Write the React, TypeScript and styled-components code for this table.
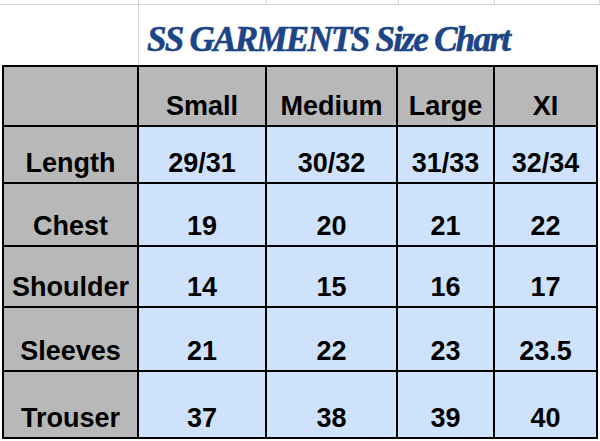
import React from 'react';
import styled, {createGlobalStyle} from 'styled-components';

const GlobalStyle = createGlobalStyle`
  html, body {
    margin: 0;
    padding: 0;
    background: #fff;
  }
  body {
    font-family: "Liberation Sans", Arial, sans-serif;
  }
`;

const sizes = ['Small', 'Medium', 'Large', 'XI'];

const rows = [
    {label: 'Length', values: ['29/31', '30/32', '31/33', '32/34']},
    {label: 'Chest', values: ['19', '20', '21', '22']},
    {label: 'Shoulder', values: ['14', '15', '16', '17']},
    {label: 'Sleeves', values: ['21', '22', '23', '23.5']},
    {label: 'Trouser', values: ['37', '38', '39', '40']},
];

const Sheet = styled.div`
    width: 600px;
    height: 441px;
    overflow: hidden;
    background: #fff;
`;

const StripRow = styled.div`
    display: grid;
    grid-template-columns: 139px 128px 132px 96px 1fr;
    height: 5px;
    border-bottom: 1px solid #d6d6d6;
    box-sizing: border-box;
`;

const GridCell = styled.div`
    border-right: 1px solid #d6d6d6;
    box-sizing: border-box;
`;

const TitleRow = styled.div`
    display: grid;
    grid-template-columns: 139px 1fr;
    height: 60px;
`;

const Title = styled.div`
    display: flex;
    align-items: flex-end;
    padding: 0 0 8px 8px;
    font-family: "Liberation Serif", "Times New Roman", serif;
    font-style: italic;
    font-weight: 700;
    font-size: 35px;
    letter-spacing: -1.7px;
    line-height: 1;
    color: #1c4587;
    -webkit-text-stroke: 0.6px #1c4587;
    white-space: nowrap;
`;

const Table = styled.div`
    display: grid;
    grid-template-columns: 133px 126px 129px 95px 101px;
    grid-template-rows: 58px 55px 61px 59px 62px 65px;
    gap: 2px;
    padding: 2px;
    margin-left: 2px;
    width: 596px;
    box-sizing: border-box;
    background: #000;
`;

const Cell = styled.div<{ $head?: boolean }>`
    display: flex;
    align-items: flex-end;
    justify-content: center;
    padding-bottom: 5px;
    box-sizing: border-box;
    background: ${p => (p.$head ? '#b8b8b8' : '#cfe2fb')};
    font-weight: 700;
    font-size: 27px;
    line-height: 1;
    color: #000;
    white-space: nowrap;
`;

function App() {
    return (
        <Sheet>
            <GlobalStyle/>
            <StripRow>
                <GridCell/>
                <GridCell/>
                <GridCell/>
                <GridCell/>
                <GridCell/>
            </StripRow>
            <TitleRow>
                <GridCell/>
                <Title>SS GARMENTS Size Chart</Title>
            </TitleRow>
            <Table>
                <Cell $head/>
                {sizes.map(s => <Cell $head key={s}>{s}</Cell>)}
                {rows.map(r => (
                    <React.Fragment key={r.label}>
                        <Cell $head>{r.label}</Cell>
                        {r.values.map((v, i) => <Cell key={i}>{v}</Cell>)}
                    </React.Fragment>
                ))}
            </Table>
        </Sheet>
    );
}

export default App;
